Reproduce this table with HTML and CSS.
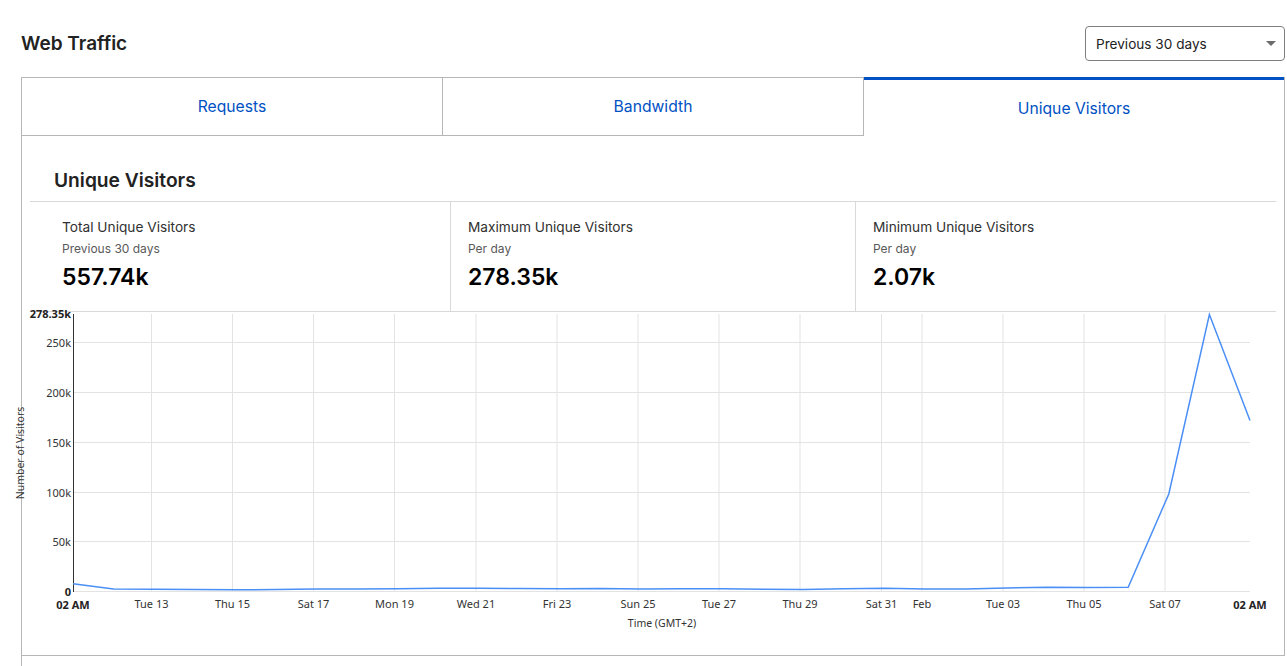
FILE: index.html
```html
<!DOCTYPE html>
<html lang="en">
<head>
<meta charset="utf-8">
<title>Web Traffic</title>
<link rel="stylesheet" href="styles.css">
</head>
<body>
<main class="page">
  <header class="header">
    <h1 class="title">Web Traffic</h1>
    <div class="select">
      <span class="select-text">Previous 30 days</span>
      <svg class="caret" width="10" height="5" viewBox="0 0 10 5"><path d="M0 0 L10 0 L5 5 Z" fill="#6b6b6b"/></svg>
    </div>
  </header>

  <section class="card">
    <nav class="tabs">
      <div class="tab">Requests</div>
      <div class="tab">Bandwidth</div>
      <div class="tab active">Unique Visitors</div>
    </nav>

    <div class="panel">
      <h2 class="panel-title">Unique Visitors</h2>

      <div class="stats">
        <div class="stat">
          <div class="stat-label">Total Unique Visitors</div>
          <div class="stat-sub">Previous 30 days</div>
          <div class="stat-value">557.74k</div>
        </div>
        <div class="stat">
          <div class="stat-label">Maximum Unique Visitors</div>
          <div class="stat-sub">Per day</div>
          <div class="stat-value">278.35k</div>
        </div>
        <div class="stat">
          <div class="stat-label">Minimum Unique Visitors</div>
          <div class="stat-sub">Per day</div>
          <div class="stat-value">2.07k</div>
        </div>
      </div>

      <svg class="chart" width="1262" height="330" viewBox="0 0 1262 330">
        <g class="grid">
          <line x1="51" y1="30.5" x2="1228" y2="30.5"/>
          <line x1="51" y1="80.5" x2="1228" y2="80.5"/>
          <line x1="51" y1="130.5" x2="1228" y2="130.5"/>
          <line x1="51" y1="180.5" x2="1228" y2="180.5"/>
          <line x1="51" y1="229.5" x2="1228" y2="229.5"/>
          <line x1="51" y1="279.5" x2="1228" y2="279.5"/>
          <line x1="129.5" y1="2" x2="129.5" y2="279.5"/>
          <line x1="210.5" y1="2" x2="210.5" y2="279.5"/>
          <line x1="291.5" y1="2" x2="291.5" y2="279.5"/>
          <line x1="372.5" y1="2" x2="372.5" y2="279.5"/>
          <line x1="454" y1="2" x2="454" y2="279.5"/>
          <line x1="535" y1="2" x2="535" y2="279.5"/>
          <line x1="616" y1="2" x2="616" y2="279.5"/>
          <line x1="697" y1="2" x2="697" y2="279.5"/>
          <line x1="778" y1="2" x2="778" y2="279.5"/>
          <line x1="859.5" y1="2" x2="859.5" y2="279.5"/>
          <line x1="900" y1="2" x2="900" y2="279.5"/>
          <line x1="981" y1="2" x2="981" y2="279.5"/>
          <line x1="1062" y1="2" x2="1062" y2="279.5"/>
          <line x1="1143" y1="2" x2="1143" y2="279.5"/>
        </g>
        <line class="axis" x1="51.5" y1="2" x2="51.5" y2="280"/>

        <g class="ylabels">
          <text class="bold" x="49" y="6">278.35k</text>
          <text x="49" y="34.5">250k</text>
          <text x="49" y="84.5">200k</text>
          <text x="49" y="134.5">150k</text>
          <text x="49" y="184.5">100k</text>
          <text x="49" y="233.5">50k</text>
          <text class="bold" x="49" y="283.5">0</text>
        </g>

        <g class="xlabels">
          <text class="bold" x="51" y="296.5">02 AM</text>
          <text x="129.5" y="296">Tue 13</text>
          <text x="210.5" y="296">Thu 15</text>
          <text x="291.5" y="296">Sat 17</text>
          <text x="372.5" y="296">Mon 19</text>
          <text x="454" y="296">Wed 21</text>
          <text x="535" y="296">Fri 23</text>
          <text x="616" y="296">Sun 25</text>
          <text x="697" y="296">Tue 27</text>
          <text x="778" y="296">Thu 29</text>
          <text x="859.5" y="296">Sat 31</text>
          <text x="900" y="296">Feb</text>
          <text x="981" y="296">Tue 03</text>
          <text x="1062" y="296">Thu 05</text>
          <text x="1143" y="296">Sat 07</text>
          <text class="bold" x="1228" y="296.5">02 AM</text>
        </g>

        <text class="axis-title" x="640" y="315">Time (GMT+2)</text>
        <text class="axis-title" transform="translate(1.5,141) rotate(-90)">Number of Visitors</text>

        <polyline class="series" points="51,271.8 91.6,277 132.2,277.3 172.8,277.5 213.3,277.7 253.9,277.6 294.5,276.9 335.1,277.1 375.7,276.7 416.3,276.3 456.9,276.2 497.4,276.6 538,276.8 578.6,276.4 619.2,276.9 659.8,276.8 700.4,276.7 741,277.2 781.5,277.4 822.1,276.8 862.7,276.2 903.3,277 943.9,276.9 984.5,275.9 1025.1,275.2 1065.6,275.5 1106.2,275.2 1146.8,182 1187.4,2.5 1228,108.4"/>
      </svg>
    </div>
  </section>
  <div class="next-section"></div>
</main>
</body>
</html>
```

FILE: styles.css
```css
* { box-sizing: border-box; }

html, body {
  margin: 0;
  padding: 0;
  background: #ffffff;
}

body {
  font-family: Inter, "Noto Sans", "Liberation Sans", sans-serif;
  color: #222222;
}

.page {
  padding: 26px 2px 0 21px;
}

.header {
  display: flex;
  align-items: center;
  justify-content: space-between;
  height: 35px;
}

.title {
  margin: 0;
  font-size: 19px;
  font-weight: 600;
  color: #222222;
  line-height: 24px;
}

.select {
  width: 200px;
  height: 35px;
  border: 1px solid #7f7f7f;
  border-radius: 4px;
  display: flex;
  align-items: center;
  justify-content: space-between;
  padding: 0 8px 0 10px;
}

.select-text {
  font-size: 13.6px;
  color: #222222;
}

.caret {
  display: block;
  margin-top: -1px;
}

.card {
  margin-top: 16px;
  border-left: 1px solid #b6b6b6;
  border-right: 1px solid #b6b6b6;
  border-bottom: 1px solid #b6b6b6;
}

.tabs {
  display: flex;
}

.tab {
  flex: 1 1 0;
  height: 59px;
  display: flex;
  align-items: center;
  justify-content: center;
  font-size: 15.7px;
  color: #0051c3;
  border-top: 1px solid #b6b6b6;
  border-bottom: 1px solid #b6b6b6;
  border-right: 1px solid #b6b6b6;
}

.tab.active {
  border-top: 3px solid #0051c3;
  border-bottom: none;
  border-right: none;
}

.panel {
  padding-top: 32px;
}

.panel-title {
  margin: 0 0 9px 0;
  padding-left: 32px;
  font-size: 19.2px;
  line-height: 24px;
  font-weight: 600;
  color: #222222;
}

.stats {
  margin: 0 8px;
  padding: 0 16px 0 15px;
  display: grid;
  grid-template-columns: repeat(3, 1fr);
  border-top: 1px solid #d9d9d9;
  border-bottom: 1px solid #d9d9d9;
}

.stat {
  padding: 15px 17px 18px 17px;
}

.stat + .stat {
  border-left: 1px solid #d9d9d9;
}

.stat-label {
  font-size: 13.7px;
  line-height: 20px;
  color: #313131;
}

.stat-sub {
  margin-top: 4px;
  font-size: 12px;
  line-height: 16px;
  color: #595959;
}

.stat-value {
  margin-top: 4px;
  font-size: 23px;
  line-height: 32px;
  font-weight: 600;
  color: #000000;
}

.chart {
  display: block;
  overflow: visible;
  margin-bottom: 13px;
  font-family: "Noto Sans", "Liberation Sans", sans-serif;
}

.grid line {
  stroke: #e3e3e3;
  stroke-width: 1;
}

.axis {
  stroke: #333333;
  stroke-width: 1;
}

.ylabels text {
  font-size: 11px;
  fill: #333333;
  text-anchor: end;
}

.xlabels text {
  font-size: 11px;
  fill: #333333;
  text-anchor: middle;
}

.chart .bold {
  font-weight: 700;
  fill: #222222;
}

.axis-title {
  font-size: 10.5px;
  fill: #333333;
  text-anchor: middle;
}

.series {
  fill: none;
  stroke: #4a8ff5;
  stroke-width: 1.5;
  stroke-linejoin: miter;
}

.next-section {
  height: 20px;
  border-left: 1px solid #b6b6b6;
}
```
